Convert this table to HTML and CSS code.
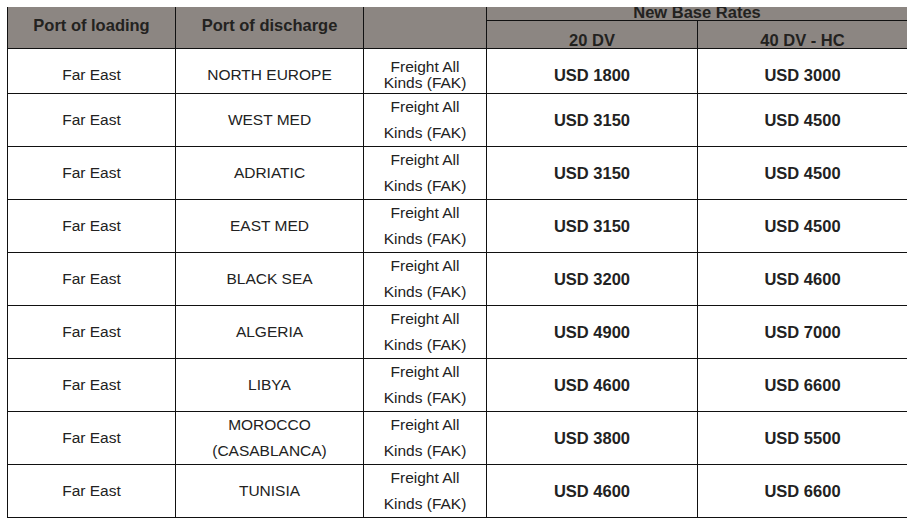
FILE: index.html
```html
<!DOCTYPE html>
<html>
<head>
<meta charset="utf-8">
<link rel="stylesheet" href="styles.css">
</head>
<body>
<div class="wrap">
<table class="rates">
  <colgroup>
    <col class="c1"><col class="c2"><col class="c3"><col class="c4"><col class="c5">
  </colgroup>
  <thead>
    <tr class="h1">
      <th rowspan="2" class="hmain">Port of loading</th>
      <th rowspan="2" class="hmain">Port of discharge</th>
      <th rowspan="2" class="hmain"></th>
      <th colspan="2" class="hgroup">New Base Rates</th>
    </tr>
    <tr class="h2">
      <th class="hsub">20 DV</th>
      <th class="hsub">40 DV - HC</th>
    </tr>
  </thead>
  <tbody>
    <tr class="first">
      <td>Far East</td><td>NORTH EUROPE</td><td class="fak">Freight All<br>Kinds (FAK)</td><td class="val">USD 1800</td><td class="val">USD 3000</td>
    </tr>
    <tr>
      <td>Far East</td><td>WEST MED</td><td class="fak">Freight All<br>Kinds (FAK)</td><td class="val">USD 3150</td><td class="val">USD 4500</td>
    </tr>
    <tr>
      <td>Far East</td><td>ADRIATIC</td><td class="fak">Freight All<br>Kinds (FAK)</td><td class="val">USD 3150</td><td class="val">USD 4500</td>
    </tr>
    <tr>
      <td>Far East</td><td>EAST MED</td><td class="fak">Freight All<br>Kinds (FAK)</td><td class="val">USD 3150</td><td class="val">USD 4500</td>
    </tr>
    <tr>
      <td>Far East</td><td>BLACK SEA</td><td class="fak">Freight All<br>Kinds (FAK)</td><td class="val">USD 3200</td><td class="val">USD 4600</td>
    </tr>
    <tr>
      <td>Far East</td><td>ALGERIA</td><td class="fak">Freight All<br>Kinds (FAK)</td><td class="val">USD 4900</td><td class="val">USD 7000</td>
    </tr>
    <tr>
      <td>Far East</td><td>LIBYA</td><td class="fak">Freight All<br>Kinds (FAK)</td><td class="val">USD 4600</td><td class="val">USD 6600</td>
    </tr>
    <tr>
      <td>Far East</td><td class="fak">MOROCCO<br>(CASABLANCA)</td><td class="fak">Freight All<br>Kinds (FAK)</td><td class="val">USD 3800</td><td class="val">USD 5500</td>
    </tr>
    <tr>
      <td>Far East</td><td>TUNISIA</td><td class="fak">Freight All<br>Kinds (FAK)</td><td class="val">USD 4600</td><td class="val">USD 6600</td>
    </tr>
  </tbody>
</table>
</div>
</body>
</html>
```

FILE: styles.css
```css
html, body {
  margin: 0;
  padding: 0;
  background: #ffffff;
}

.wrap {
  margin: 7px 0 0 7px;
  width: 900px;
  overflow: hidden;
}

.rates {
  border-collapse: collapse;
  table-layout: fixed;
  width: 900px;
  font-family: "Liberation Sans", Arial, sans-serif;
  color: #222222;
}

.c1 { width: 168px; }
.c2 { width: 188px; }
.c3 { width: 123px; }
.c4 { width: 211px; }
.c5 { width: 210px; }

.rates th,
.rates td {
  border: 1px solid #111111;
  text-align: center;
  padding: 0;
}

.rates thead th {
  background: #8c8682;
  border-top: none;
  font-weight: bold;
  font-size: 16.5px;
  line-height: 16px;
  color: #23221f;
}

.h1 { height: 13px; }
.h2 { height: 28px; }

.hmain {
  vertical-align: middle;
  padding-bottom: 5px !important;
}

.hgroup {
  vertical-align: top;
  line-height: 10px !important;
  height: 12px;
}

.hsub {
  vertical-align: bottom;
  padding-bottom: 0;
}

.rates tbody td {
  font-size: 15.5px;
  line-height: 26px;
  vertical-align: middle;
  height: 52px;
}

.rates tbody tr.first td {
  line-height: 16px;
  height: 35px;
  padding-top: 9px;
}

.rates tbody td.val {
  font-weight: bold;
  font-size: 16.5px;
}
```
